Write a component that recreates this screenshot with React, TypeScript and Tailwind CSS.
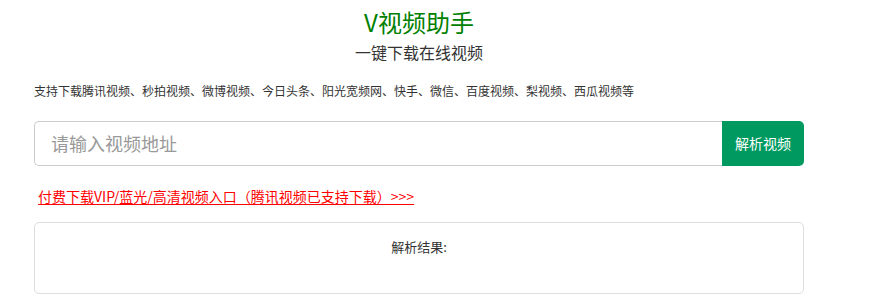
import React, { useState } from 'react';

export default function App() {
  const [url, setUrl] = useState('');

  return (
    <div className="min-h-screen bg-white" style={{ fontFamily: '"Microsoft YaHei", "Noto Sans CJK SC", "Liberation Sans", sans-serif' }}>
      <div className="ml-[34px] w-[770px] pt-[7px]">
        <h1 className="text-center text-[24px] leading-[30px] font-normal text-[#008000]">V视频助手</h1>
        <h2 className="mt-[5px] text-center text-[16px] leading-[20px] font-normal text-[#333]">一键下载在线视频</h2>

        <p className="mt-[21px] text-[12px] leading-[16px] text-[#333]">
          支持下载腾讯视频、秒拍视频、微博视频、今日头条、阳光宽频网、快手、微信、百度视频、梨视频、西瓜视频等
        </p>

        <div className="mt-[22px] flex h-[45px]">
          <input
            value={url}
            onChange={e => setUrl(e.target.value)}
            placeholder="请输入视频地址"
            className="flex-1 min-w-0 rounded-l-[5px] border border-r-0 border-[#ccc] px-[16px] text-[18px] text-[#555] outline-none placeholder:text-[#999]"
          />
          <button className="w-[82px] shrink-0 rounded-r-[5px] bg-[#009a61] text-[14px] text-white">解析视频</button>
        </div>

        <div className="mt-[17px] pl-[4px]">
          <a href="#" className="text-[14px] leading-[20px] text-[#f00] underline underline-offset-2">
            付费下载VIP/蓝光/高清视频入口（腾讯视频已支持下载）&gt;&gt;&gt;
          </a>
        </div>

        <div className="mt-[15px] h-[72px] rounded-[5px] border border-[#ddd] pt-[15px]">
          <p className="text-center text-[13px] leading-[18px] text-[#333]">解析结果:</p>
        </div>
      </div>
    </div>
  );
}
